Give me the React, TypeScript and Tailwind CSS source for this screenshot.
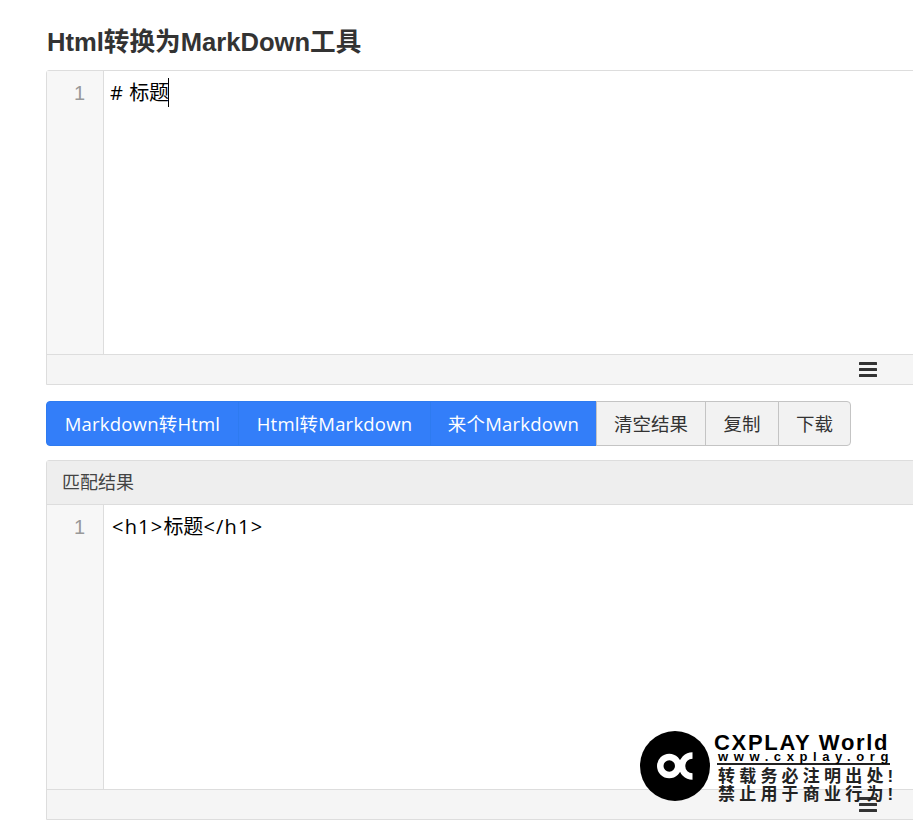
import type { ReactNode } from 'react';

const sans = "font-['Liberation_Sans','Noto_Sans_CJK_SC',sans-serif]";
const ui = "font-['Open_Sans','Noto_Sans_CJK_SC',sans-serif]";

function Toolbar() {
  return (
    <div className="flex h-[29px] items-center justify-end bg-[#f5f5f5] pr-[68px]">
      <svg width="18" height="15" viewBox="0 0 18 15">
        <rect x="0" y="0" width="18" height="3" rx="0.5" fill="#333" />
        <rect x="0" y="6" width="18" height="3" rx="0.5" fill="#333" />
        <rect x="0" y="12" width="18" height="3" rx="0.5" fill="#333" />
      </svg>
    </div>
  );
}

function Editor({ code, cursor, left, height }: { code: ReactNode; cursor?: boolean; left: string; height: string }) {
  return (
    <div className={`flex border-b border-[#ddd] ${height}`}>
      <div className="w-[57px] shrink-0 border-r border-[#ddd] bg-[#f7f7f7] pr-[18px] pt-[9px] text-right text-[20px] leading-[26px] text-[#999]">
        1
      </div>
      <div className={`flex h-[36px] items-start bg-white pt-[9px] ${left}`}>
        <span className={`text-[20px] leading-[26px] text-black ${ui}`}>{code}</span>
        {cursor && <span className="-ml-px -mt-[2px] h-[29px] w-px bg-black" />}
      </div>
    </div>
  );
}

function Watermark() {
  return (
    <div className="absolute left-[640px] top-[731px] flex items-start gap-[4px]">
      <div className="flex h-[70px] w-[70px] items-center justify-center rounded-full bg-black">
        <svg width="36" height="28" viewBox="0 0 36 28" fill="none" stroke="white" strokeWidth="6.5">
          <circle cx="12.25" cy="14" r="9" />
          <path d="M35.5 3.5A10.5 10.5 0 0 0 35.5 24.5" />
        </svg>
      </div>
      <div className="w-[180px] pt-[2px] text-black">
        <div className="h-[20px] whitespace-nowrap text-[22px] font-bold leading-[20px] tracking-[1.7px]">CXPLAY World</div>
        <div className="ml-[4px] h-[8px] whitespace-nowrap text-[13px] font-bold leading-[8px] tracking-[5.6px]">www.cxplay.org</div>
        <div className="ml-[3px] mt-[2px] h-[2px] w-[173px] bg-[#222]" />
        <div className="ml-[4px] mt-[3px] whitespace-nowrap text-[17px] font-bold leading-[18px] tracking-[4.2px] text-[#222]">转载务必注明出处!</div>
        <div className="ml-[4px] whitespace-nowrap text-[17px] font-bold leading-[18px] tracking-[4.2px] text-[#222]">禁止用于商业行为!</div>
      </div>
    </div>
  );
}

export default function App() {
  return (
    <div className={`relative h-[828px] w-[913px] overflow-hidden bg-white ${sans}`}>
      <div className="w-[900px] pl-[46px] pt-[26px] box-content">
        <h1 className="ml-px text-[25.6px] font-bold leading-[32px] text-[#333]">Html转换为MarkDown工具</h1>

        <div className="mt-[12px] w-[900px] rounded-tl-[3px] border border-[#ddd]">
          <Editor
            code={<><span className="tracking-[0.5px]"># </span>标题</>}
            cursor
            left="pl-[6px]"
            height="h-[284px]"
          />
          <Toolbar />
        </div>

        <div className={`mt-[16px] flex h-[45px] text-[18.5px] ${ui}`}>
          <button className="w-[193px] rounded-l-[4px] border border-[#2e7bf0] bg-[#337ef9] tracking-[0.2px] text-white">Markdown转Html</button>
          <button className="-ml-px w-[193px] border border-[#2e7bf0] bg-[#337ef9] tracking-[0.2px] text-white">Html转Markdown</button>
          <button className="-ml-px w-[167px] border border-[#2e7bf0] bg-[#337ef9] tracking-[0.2px] text-white">来个Markdown</button>
          <button className="-ml-px w-[110px] border border-[#c4c4c4] bg-[#f2f2f2] text-[#333]">清空结果</button>
          <button className="-ml-px w-[74px] border border-[#c4c4c4] bg-[#f2f2f2] text-[#333]">复制</button>
          <button className="-ml-px w-[73px] rounded-r-[4px] border border-[#c4c4c4] bg-[#f2f2f2] text-[#333]">下载</button>
        </div>

        <div className="mt-[14px] w-[900px] rounded-tl-[3px] border border-[#ddd]">
          <div className="flex h-[44px] items-center border-b border-[#ddd] bg-[#eee] pl-[15px] pt-[2px] text-[18px] text-[#444]">
            匹配结果
          </div>
          <Editor
            code={<><span className="tracking-[1.2px]">&lt;h1&gt;</span>标题<span className="tracking-[1.2px]">&lt;/h1&gt;</span></>}
            left="pl-[8px]"
            height="h-[285px]"
          />
          <Toolbar />
        </div>
      </div>
      <Watermark />
    </div>
  );
}
